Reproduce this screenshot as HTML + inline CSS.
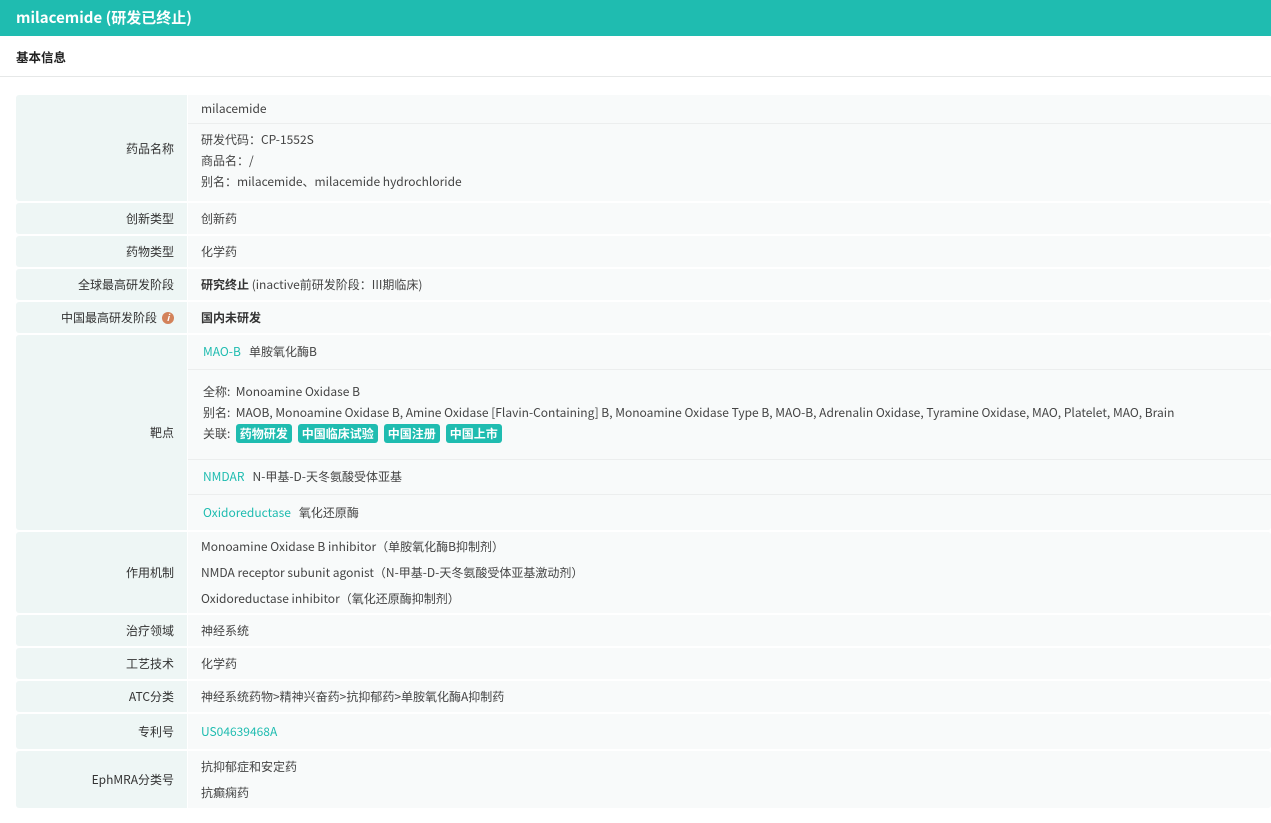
<!DOCTYPE html>
<html><head><meta charset="utf-8"><style>
*{margin:0;padding:0;box-sizing:border-box}
body{width:1271px;height:823px;background:#fff;font-family:"Noto Sans CJK SC","Liberation Sans",sans-serif;font-size:12px;color:#444;position:relative;overflow:hidden}
.hdr{position:absolute;left:0;top:0;width:1271px;height:36px;background:#1fbcb0;color:#fff;font-weight:bold;font-size:15px;line-height:36px;padding-left:16px}
.sec{position:absolute;left:0;top:38px;width:1271px;height:39px;border-bottom:1px solid #e6e8e8;font-weight:bold;font-size:12.5px;color:#222;line-height:38px;padding-left:16px}
.row{position:absolute;left:16px;width:1255px;display:flex;border-radius:3px;overflow:hidden}
.lab{width:171px;background:#eef6f5;text-align:right;padding-right:13px;display:flex;align-items:center;justify-content:flex-end;color:#333}
.val{flex:1;background:#f8fafa;margin-left:1px;padding-left:13px;display:flex;flex-direction:column;justify-content:center}
.t{color:#1fbcb0}
.b{font-weight:bold;color:#333}
.tag{display:inline-block;background:#1fbcb0;color:#fff;font-weight:bold;border-radius:3px;padding:0 4px;height:19px;line-height:19px;margin-right:6px}
.div{border-top:1px solid #eceeee}
.i{display:inline-block;width:12px;height:12px;border-radius:6px;background:#d3825a;color:#fff;font-size:9px;line-height:12px;text-align:center;font-style:italic;font-weight:bold;margin-left:5px}
</style></head><body>
<div class="hdr">milacemide (研发已终止)</div>
<div class="sec">基本信息</div>

<div class="row" style="top:95px;height:106px"><div class="lab">药品名称</div><div class="val" style="padding:0;justify-content:flex-start">
<div style="height:28px;line-height:28px;padding-left:13px">milacemide</div>
<div class="div" style="padding:5px 0 0 13px;line-height:21px">研发代码：CP-1552S<br>商品名：/<br>别名：milacemide、milacemide hydrochloride</div></div></div>

<div class="row" style="top:203px;height:31px"><div class="lab">创新类型</div><div class="val">创新药</div></div>
<div class="row" style="top:236px;height:31px"><div class="lab">药物类型</div><div class="val">化学药</div></div>
<div class="row" style="top:269px;height:31px"><div class="lab">全球最高研发阶段</div><div class="val"><div><span class="b">研究终止</span> (inactive前研发阶段：III期临床)</div></div></div>
<div class="row" style="top:302px;height:31px"><div class="lab">中国最高研发阶段<span class="i">i</span></div><div class="val"><span class="b">国内未研发</span></div></div>

<div class="row" style="top:335px;height:195px"><div class="lab">靶点</div><div class="val" style="padding:0;justify-content:flex-start">
<div style="height:34px;line-height:34px;padding-left:15px"><span class="t">MAO-B</span>&nbsp;&nbsp; 单胺氧化酶B</div>
<div class="div" style="height:90px;padding:11px 0 0 15px;line-height:21px">全称:&nbsp; Monoamine Oxidase B<br>别名:&nbsp; MAOB, Monoamine Oxidase B, Amine Oxidase [Flavin-Containing] B, Monoamine Oxidase Type B, MAO-B, Adrenalin Oxidase, Tyramine Oxidase, MAO, Platelet, MAO, Brain<br>关联:&nbsp; <span class="tag">药物研发</span><span class="tag">中国临床试验</span><span class="tag">中国注册</span><span class="tag">中国上市</span></div>
<div class="div" style="height:35px;line-height:34px;padding-left:15px"><span class="t">NMDAR</span>&nbsp;&nbsp; N-甲基-D-天冬氨酸受体亚基</div>
<div class="div" style="height:36px;line-height:35px;padding-left:15px"><span class="t">Oxidoreductase</span>&nbsp;&nbsp; 氧化还原酶</div>
</div></div>

<div class="row" style="top:532px;height:81px"><div class="lab">作用机制</div><div class="val" style="line-height:26px">Monoamine Oxidase B inhibitor（单胺氧化酶B抑制剂）<br>NMDA receptor subunit agonist（N-甲基-D-天冬氨酸受体亚基激动剂）<br>Oxidoreductase inhibitor（氧化还原酶抑制剂）</div></div>
<div class="row" style="top:615px;height:31px"><div class="lab">治疗领域</div><div class="val">神经系统</div></div>
<div class="row" style="top:648px;height:31px"><div class="lab">工艺技术</div><div class="val">化学药</div></div>
<div class="row" style="top:681px;height:31px"><div class="lab">ATC分类</div><div class="val">神经系统药物&gt;精神兴奋药&gt;抗抑郁药&gt;单胺氧化酶A抑制药</div></div>
<div class="row" style="top:714px;height:35px"><div class="lab">专利号</div><div class="val"><span class="t">US04639468A</span></div></div>
<div class="row" style="top:751px;height:57px"><div class="lab">EphMRA分类号</div><div class="val" style="line-height:26px">抗抑郁症和安定药<br>抗癫痫药</div></div>
</body></html>
